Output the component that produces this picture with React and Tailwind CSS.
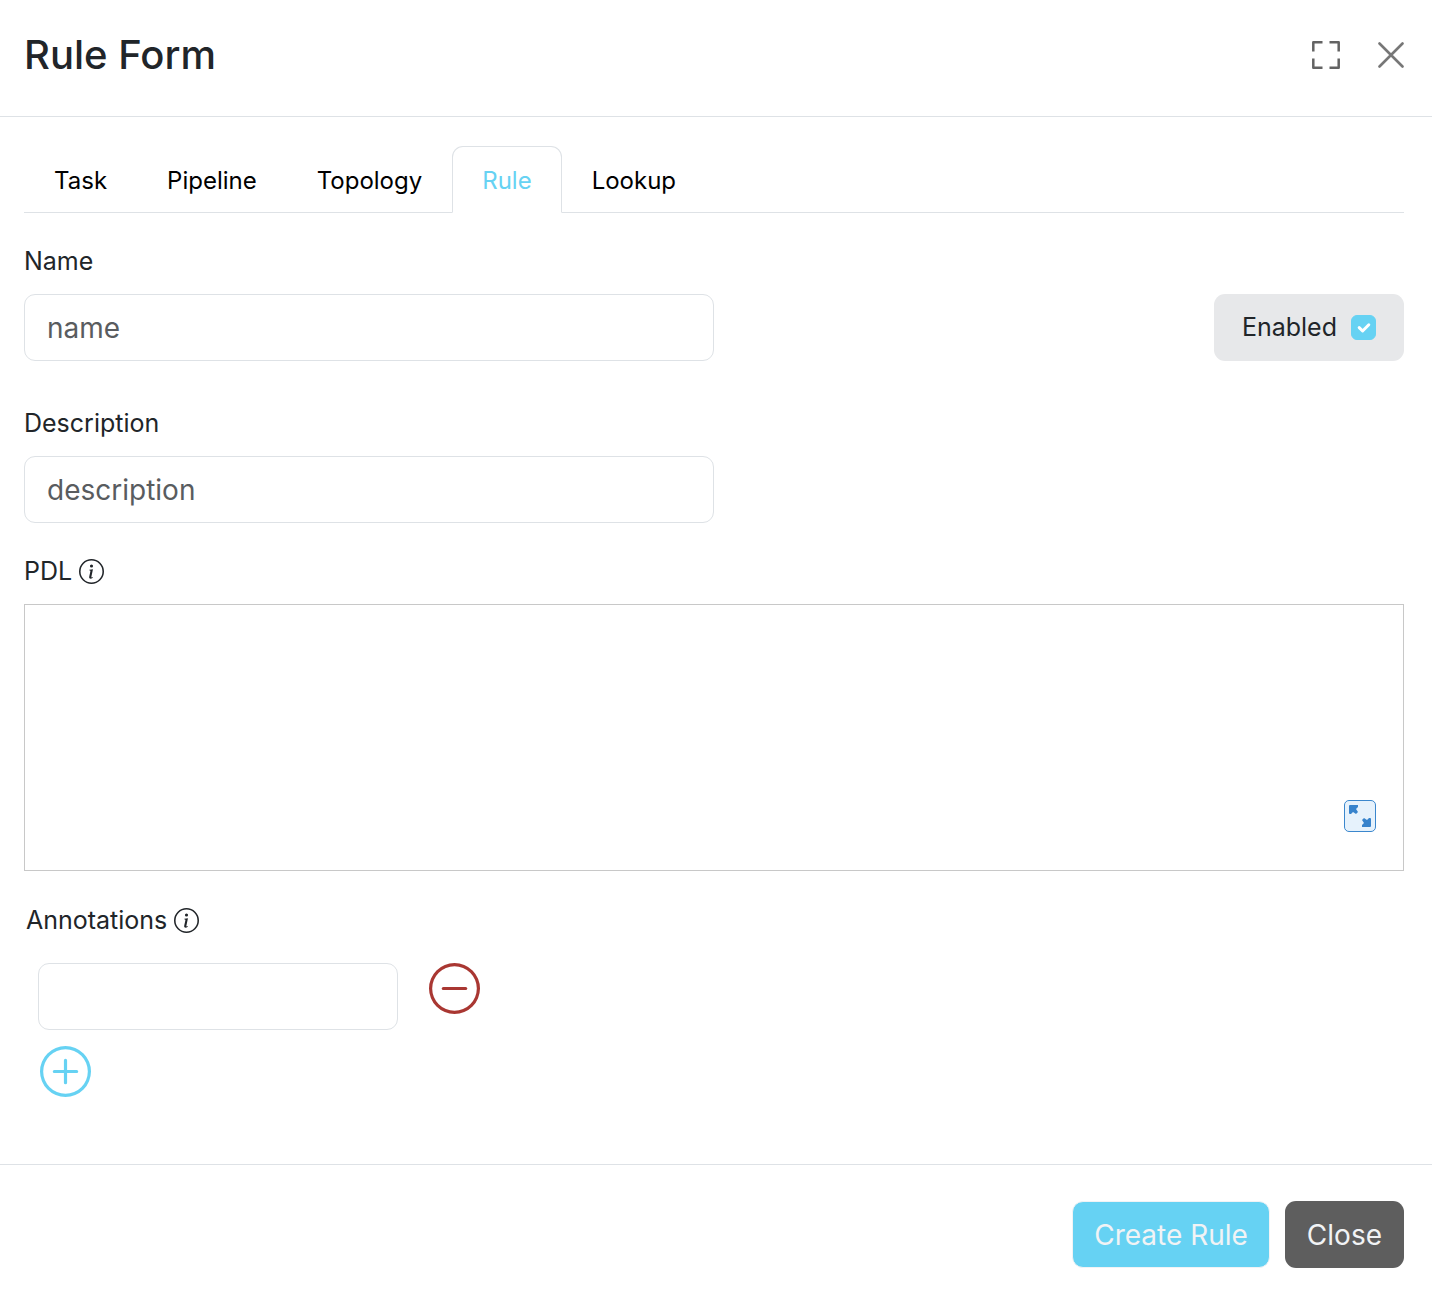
import { useState } from "react";
import { BsDashCircle, BsInfoCircle, BsPlusCircle } from "react-icons/bs";

const tabs = ["Task", "Pipeline", "Topology", "Rule", "Lookup"];

function TextField({ id, label }) {
  return (
    <div className="flex w-1/2 flex-col gap-[15px]">
      <label htmlFor={id} className="text-[25px] leading-9">
        {label}
      </label>
      <input
        id={id}
        type="text"
        placeholder={label.toLowerCase()}
        className="h-[67px] w-full rounded-[11px] border border-[#dee2e6] bg-white px-[22px] text-[28px] placeholder:text-[#595c5f]"
      />
    </div>
  );
}

function FullscreenIcon() {
  return (
    <svg viewBox="0 0 28 28" className="size-7" fill="none" stroke="currentColor" strokeWidth="2.5" strokeLinejoin="round" aria-hidden="true">
      <path d="M1.3 10.5V1.3h9.2M17.5 1.3h9.2v9.2M26.7 17.5v9.2h-9.2M10.5 26.7H1.3v-9.2" />
    </svg>
  );
}

function CloseIcon() {
  return (
    <svg viewBox="0 0 26 26" className="size-[26px]" fill="none" stroke="currentColor" strokeWidth="2.6" strokeLinecap="round" aria-hidden="true">
      <path d="M1.5 1.5 24.5 24.5M24.5 1.5 1.5 24.5" />
    </svg>
  );
}

function ExpandIcon() {
  const arrow = "M6 5h8v2l-2 2 2 3-2 2-3-2-2 2H6q-1 0-1-1V6q0-1 1-1z";
  return (
    <svg viewBox="0 0 32 32" className="size-8" aria-hidden="true">
      <rect x="0.5" y="0.5" width="31" height="31" rx="4.5" fill="#e6f2fc" stroke="#3b87cd" />
      <path fill="#3783cc" d={arrow} />
      <path fill="#3783cc" d={arrow} transform="rotate(180 16 16)" />
    </svg>
  );
}

export default function App() {
  const [active, setActive] = useState("Rule");
  const [enabled, setEnabled] = useState(true);

  return (
    <div className="flex min-h-screen flex-col bg-white font-['Inter',sans-serif] text-[#212529]">
      <header className="flex items-center justify-between border-b border-[#dee2e6] pt-[25px] pr-7 pb-[31px] pl-6">
        <h1 className="text-[40px] leading-[60px] font-medium">Rule Form</h1>
        <div className="flex items-center gap-[38px]">
          <button type="button" aria-label="Full screen" className="text-[#636363]">
            <FullscreenIcon />
          </button>
          <button type="button" aria-label="Dismiss" className="text-[#777]">
            <CloseIcon />
          </button>
        </div>
      </header>

      <main className="flex flex-1 flex-col pt-[29px] pr-7 pb-[66px] pl-6">
        <div role="tablist" className="flex border-b border-[#dee2e6]">
          {tabs.map((tab) => (
            <button
              key={tab}
              type="button"
              role="tab"
              aria-selected={tab === active}
              onClick={() => setActive(tab)}
              className={
                tab === active
                  ? "-mb-px h-[67px] rounded-t-[11px] border border-b-white border-[#dee2e6] bg-white px-[29px] pt-0.5 text-[24px] text-[#66d2f3]"
                  : "-mb-px h-[67px] border border-transparent px-[29px] pt-0.5 text-[24px] text-black"
              }
            >
              {tab}
            </button>
          ))}
        </div>

        <div className="mt-[30px] flex items-end justify-between">
          <TextField id="rule-name" label="Name" />
          <label className="flex h-[67px] items-center gap-[14px] rounded-[11px] bg-[#e7e8ea] px-7 text-[25px]">
            Enabled
            <input
              type="checkbox"
              checked={enabled}
              onChange={(e) => setEnabled(e.target.checked)}
              className="peer sr-only"
            />
            <span className="flex size-[25px] items-center justify-center rounded-md border border-[#66d2f3] bg-white peer-checked:bg-[#66d2f3]">
              <svg viewBox="0 0 20 20" className="size-5" fill="none" stroke="#fff" strokeWidth="3" strokeLinecap="round" strokeLinejoin="round" aria-hidden="true">
                <path d="m5.2 9.6 3.4 3.4 6.2-6.2" />
              </svg>
            </span>
          </label>
        </div>

        <div className="mt-11">
          <TextField id="rule-description" label="Description" />
        </div>

        <div className="mt-[30px] flex items-center gap-[7px] text-[25px] leading-9">
          <label htmlFor="rule-pdl">PDL</label>
          <BsInfoCircle className="size-[25px]" />
        </div>
        <div className="relative mt-[15px] flex">
          <textarea id="rule-pdl" className="h-[267px] w-full resize-none border border-[#c8c8c8] bg-white p-4 text-[25px]" />
          <button type="button" aria-label="Expand editor" className="absolute right-7 bottom-[39px]">
            <ExpandIcon />
          </button>
        </div>

        <div className="mt-[31px] flex items-center gap-[7px] pl-0.5 text-[25px] leading-9">
          <label htmlFor="rule-annotation">Annotations</label>
          <BsInfoCircle className="size-[25px]" />
        </div>
        <div className="mt-[25px] flex items-start gap-[31px] pl-3.5">
          <input
            id="rule-annotation"
            type="text"
            className="h-[67px] w-[360px] rounded-[11px] border border-[#dee2e6] bg-white px-[22px] text-[28px]"
          />
          <button type="button" aria-label="Remove annotation" className="text-[#a93732]">
            <BsDashCircle className="size-[51px]" />
          </button>
        </div>
        <button type="button" aria-label="Add annotation" className="mt-4 ml-4 self-start text-[#66d2f3]">
          <BsPlusCircle className="size-[51px]" />
        </button>
      </main>

      <footer className="flex items-center justify-end gap-[15px] border-t border-[#dee2e6] pt-9 pr-7 pb-7 pl-6">
        <button type="submit" className="h-[67px] rounded-[11px] border border-[#f1f3f5] bg-[#66d2f3] px-[21px] text-[28px] text-[#f1f3f5]">
          Create Rule
        </button>
        <button type="button" className="h-[67px] rounded-[11px] bg-[#5e5e5e] px-[22px] text-[28px] text-[#f1f3f5]">
          Close
        </button>
      </footer>
    </div>
  );
}
